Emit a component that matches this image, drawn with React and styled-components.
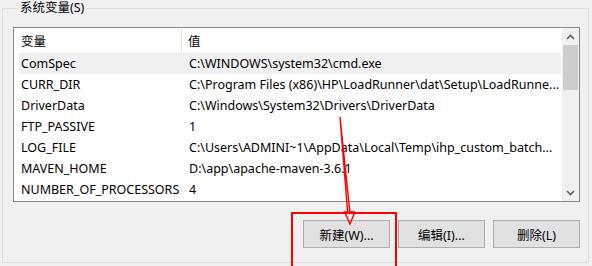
import React from "react";
import styled, { createGlobalStyle } from "styled-components";

const Global = createGlobalStyle`
  html, body { margin: 0; padding: 0; background: #f0f0f0; }
  body {
    font-family: "Noto Sans", "Noto Sans CJK SC", sans-serif;
    font-size: 12.5px;
    color: #000;
    width: 592px;
    height: 266px;
    overflow: hidden;
  }
`;

const Page = styled.div`
  width: 592px;
  height: 266px;
  position: relative;
  overflow: hidden;
`;

const Group = styled.fieldset`
  margin: 0 3px 0 2px;
  padding: 11px 8px 14px 10px;
  border: 1px solid #dcdcdc;
  min-width: 0;
  box-sizing: border-box;
  height: 263px;
`;

const Legend = styled.legend`
  margin-left: 5px;
  padding: 0 2px;
  line-height: 16px;
  height: 16px;
`;

const List = styled.div`
  border: 1px solid #828790;
  background: #fff;
  height: 173px;
  display: flex;
  overflow: hidden;
`;

const Body = styled.div`
  flex: 1;
  display: flex;
  flex-direction: column;
  min-width: 0;
`;

const Header = styled.div`
  display: grid;
  grid-template-columns: 168px 1fr;
  height: 25px;
  align-items: center;
  flex-shrink: 0;
`;

const HeadCell = styled.div`
  padding-left: ${(p) => p.$pad}px;
  height: 100%;
  display: flex;
  align-items: center;
  border-right: ${(p) => (p.$divider ? "1px solid #e5e5e5" : "none")};
`;

const Row = styled.div`
  display: grid;
  grid-template-columns: 170px 1fr;
  height: 21px;
  align-items: center;
  margin-left: 5px;
  margin-right: 1px;
  background: ${(p) => (p.$selected ? "#f0f0f0" : "transparent")};
  flex-shrink: 0;
  white-space: nowrap;
`;

const Cell = styled.div`
  padding-left: ${(p) => p.$pad}px;
  overflow: hidden;
  white-space: nowrap;
`;

const ScrollBar = styled.div`
  width: 17px;
  flex-shrink: 0;
  background: #f0f0f0;
  display: flex;
  flex-direction: column;
  align-items: center;
`;

const ArrowBtn = styled.div`
  height: 17px;
  width: 17px;
  display: flex;
  align-items: center;
  justify-content: center;
  flex-shrink: 0;
`;

const Thumb = styled.div`
  width: 15px;
  height: 45px;
  background: #cdcdcd;
  flex-shrink: 0;
`;

const Track = styled.div`
  flex: 1;
`;

const Buttons = styled.div`
  display: flex;
  justify-content: flex-end;
  gap: 8px;
  margin-top: 18px;
`;

const BtnWrap = styled.div`
  position: relative;
`;

const Button = styled.button`
  width: 87px;
  height: 28px;
  margin: 0;
  padding: 0;
  background: #e1e1e1;
  border: 1px solid #adadad;
  font: inherit;
  color: #000;
  display: flex;
  align-items: center;
  justify-content: center;
  box-sizing: border-box;
`;

const Highlight = styled.div`
  position: absolute;
  left: -12px;
  top: -8px;
  width: 106px;
  height: 54px;
  border: 2px solid #ff0000;
  border-bottom: none;
  box-sizing: border-box;
  pointer-events: none;
`;

const Overlay = styled.svg`
  position: absolute;
  left: 0;
  top: 0;
  pointer-events: none;
`;

const rows = [
  ["ComSpec", "C:\\WINDOWS\\system32\\cmd.exe"],
  ["CURR_DIR", "C:\\Program Files (x86)\\HP\\LoadRunner\\dat\\Setup\\LoadRunne..."],
  ["DriverData", "C:\\Windows\\System32\\Drivers\\DriverData"],
  ["FTP_PASSIVE", "1"],
  ["LOG_FILE", "C:\\Users\\ADMINI~1\\AppData\\Local\\Temp\\ihp_custom_batch..."],
  ["MAVEN_HOME", "D:\\app\\apache-maven-3.6.1"],
  ["NUMBER_OF_PROCESSORS", "4"],
];

const Chevron = ({ up }) => (
  <svg width="9" height="6" viewBox="0 0 9 6">
    <path
      d={up ? "M1 5 L4.5 1.5 L8 5" : "M1 1 L4.5 4.5 L8 1"}
      fill="none"
      stroke="#606060"
      strokeWidth="1.6"
    />
  </svg>
);

export default function App() {
  return (
    <Page>
      <Global />
      <Group>
        <Legend>系统变量(S)</Legend>
        <List>
          <Body>
            <Header>
              <HeadCell $pad={7} $divider>变量</HeadCell>
              <HeadCell $pad={6}>值</HeadCell>
            </Header>
            {rows.map(([k, v], i) => (
              <Row key={k} $selected={i === 0}>
                <Cell $pad={2}>{k}</Cell>
                <Cell $pad={0}>{v}</Cell>
              </Row>
            ))}
          </Body>
          <ScrollBar>
            <ArrowBtn>
              <Chevron up />
            </ArrowBtn>
            <Thumb />
            <Track />
            <ArrowBtn>
              <Chevron />
            </ArrowBtn>
          </ScrollBar>
        </List>
        <Buttons>
          <BtnWrap>
            <Button>新建(W)...</Button>
            <Highlight />
          </BtnWrap>
          <Button>编辑(I)...</Button>
          <Button>删除(L)</Button>
        </Buttons>
      </Group>
      <Overlay width="592" height="266" viewBox="0 0 592 266">
        <polygon
          points="340,117 349.8,211.5 354.8,212 350,224 344.6,211.8 347.6,211.6"
          fill="none"
          stroke="#ff0000"
          strokeWidth="1.4"
          strokeLinejoin="miter"
        />
      </Overlay>
    </Page>
  );
}
